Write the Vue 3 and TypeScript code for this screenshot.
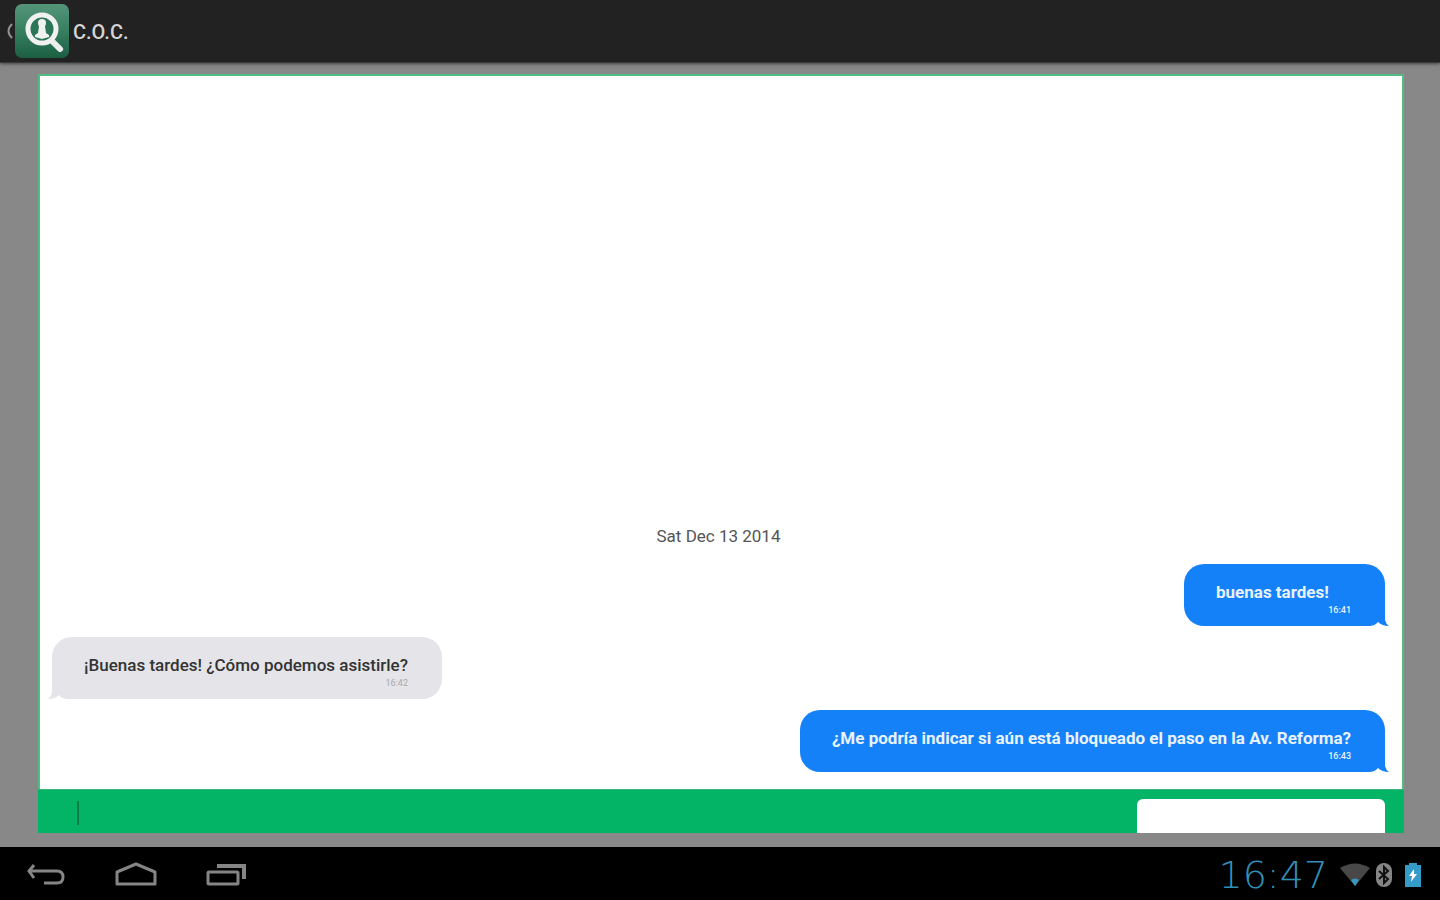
<script setup lang="ts">
import { ref } from 'vue'

interface Message {
  id: number
  text: string
  time: string
  mine: boolean
}

const draft = ref('')
const messages: Message[] = [
  { id: 1, text: 'buenas tardes!', time: '16:41', mine: true },
  { id: 2, text: '¡Buenas tardes! ¿Cómo podemos asistirle?', time: '16:42', mine: false },
  { id: 3, text: '¿Me podría indicar si aún está bloqueado el paso en la Av. Reforma?', time: '16:43', mine: true },
]
</script>

<template>
  <div class="screen">
    <header class="action-bar">
      <button class="up" type="button" aria-label="Volver">
        <svg class="chevron" width="8" height="20" viewBox="0 0 8 20" fill="none" stroke="#909090" stroke-width="2">
          <path d="M6 3Q-1 10 6 17" />
        </svg>
        <svg width="54" height="54" viewBox="0 0 54 54">
          <defs>
            <linearGradient id="tile" x1="0" y1="0" x2="0" y2="1">
              <stop offset="0" stop-color="#559579" />
              <stop offset="0.5" stop-color="#377f60" />
              <stop offset="1" stop-color="#1b5f43" />
            </linearGradient>
          </defs>
          <rect width="54" height="54" rx="7" fill="url(#tile)" />
          <path d="M36 36l9 9" stroke="#eee" stroke-width="6" stroke-linecap="round" />
          <circle cx="27" cy="25" r="14" fill="#2b7656" stroke="#f1f1f1" stroke-width="5" />
          <circle cx="27" cy="19" r="4" fill="#f1f1f1" />
          <path d="M24 22h6l1 7 3 2v2l-7 2-7-2v-2l3-2z" fill="#f1f1f1" />
        </svg>
      </button>
      <h1>C.O.C.</h1>
    </header>

    <main class="content">
      <section class="chat" aria-label="Conversación">
        <div class="history">
          <p class="date">Sat Dec 13 2014</p>
          <div
            v-for="message in messages"
            :key="message.id"
            class="bubble"
            :class="message.mine ? 'mine' : 'theirs'"
          >
            <p class="text">{{ message.text }}</p>
            <time class="time">{{ message.time }}</time>
            <svg class="tail" width="20" height="13" viewBox="0 0 20 13" aria-hidden="true">
              <path class="cutout" d="M0 12Q6 12 9 8L20 8V13H0Z" />
              <path class="point" d="M16 0V6Q17 10 20 12Q13 12 9 8V0Z" />
            </svg>
          </div>
        </div>
        <form class="composer" @submit.prevent>
          <div class="field">
            <input v-model="draft" type="text" aria-label="Mensaje" />
            <span class="caret" aria-hidden="true"></span>
          </div>
          <button class="send" type="submit" aria-label="Enviar"></button>
        </form>
      </section>
    </main>

    <footer class="system-bar">
      <nav class="keys" aria-label="Sistema">
        <button type="button" aria-label="Atrás">
          <svg width="44" height="28" viewBox="0 0 44 28" fill="none" stroke="#858585" stroke-width="3">
            <path d="M10 4L5 10L10 17M5 10H33Q39 10 39 16T33 22H20" />
          </svg>
        </button>
        <button type="button" aria-label="Inicio">
          <svg width="44" height="28" viewBox="0 0 44 28" fill="none" stroke="#858585" stroke-width="3" stroke-linejoin="round">
            <path d="M3 23V11L22 3L41 11V23Z" />
          </svg>
        </button>
        <button type="button" aria-label="Recientes">
          <svg width="44" height="28" viewBox="0 0 44 28" fill="none" stroke="#858585" stroke-width="3">
            <rect x="4" y="11" width="30" height="12" rx="1" />
            <path d="M13 5H40V18" stroke-width="4" />
          </svg>
        </button>
      </nav>
      <div class="status">
        <time class="clock">16:47</time>
        <div class="indicators">
          <svg width="30" height="26" viewBox="0 0 30 26" aria-label="Wi-Fi">
            <path d="M0 6Q15-3 30 6L15 24Z" fill="#484848" />
            <path d="M11 18Q15 15 19 18L15 24Z" fill="#3699c1" />
          </svg>
          <svg width="18" height="26" viewBox="0 0 18 26" aria-label="Bluetooth">
            <rect x="1" y="1" width="16" height="24" rx="8" fill="#858585" />
            <path d="M4 9L13 17L9 21V5L13 9L4 17" fill="none" stroke="#101010" stroke-width="2" />
          </svg>
        </div>
        <svg width="16" height="26" viewBox="0 0 16 26" aria-label="Batería">
          <path d="M0 3H4V1H12V3H16V25H0Z" fill="#359bc9" />
          <path d="M9 7L4 14H7L6 20L12 12H9Z" fill="#fff" />
        </svg>
      </div>
    </footer>
  </div>
</template>

<style>
body {
  margin: 0;
}
</style>

<style scoped>
.screen {
  display: flex;
  flex-direction: column;
  min-height: 100vh;
  background: #888;
  font-family: Roboto, "Liberation Sans", sans-serif;
}

button,
input {
  border: 0;
  padding: 0;
  background: none;
  font: inherit;
}

p,
h1 {
  margin: 0;
}

svg {
  display: block;
}

.action-bar {
  display: flex;
  align-items: center;
  gap: 4px;
  height: 62px;
  padding-left: 6px;
  background: #222;
  border-bottom: 1px solid #3a3a3a;
  box-shadow: 0 1px 3px #444;
}

.up {
  display: flex;
  align-items: center;
  gap: 1px;
}

h1 {
  padding-top: 2px;
  color: #d4d4d4;
  font-size: 20px;
  font-weight: 500;
  line-height: 28px;
}

.content {
  display: flex;
  flex: 1;
  padding: 11px 36px 14px 38px;
}

.chat {
  display: flex;
  flex: 1;
  flex-direction: column;
  min-width: 0;
}

.history {
  display: flex;
  flex: 1;
  flex-direction: column;
  justify-content: flex-end;
  gap: 11px;
  padding: 14px 17px 17px 12px;
  border: 2px solid #52bd83;
  border-bottom: 0;
  background: #fff;
}

.date {
  align-self: center;
  padding-bottom: 6px;
  color: #555;
  font-size: 17px;
  line-height: 22px;
}

.bubble {
  position: relative;
  display: flex;
  box-sizing: border-box;
  flex-direction: column;
  min-width: 201px;
  padding: 18px 34px 10px 32px;
  border-radius: 20px;
}

.mine {
  align-self: flex-end;
  border-bottom-right-radius: 0;
  background: #1581f8;
  color: #e9f3ff;
}

.theirs {
  align-self: flex-start;
  border-bottom-left-radius: 0;
  background: #e4e4e9;
  color: #333;
}

.text {
  font-size: 17px;
  font-weight: 500;
  line-height: 20px;
}

.mine .text {
  font-weight: 700;
}

.time {
  align-self: flex-end;
  margin-top: 2px;
  font-size: 9px;
  line-height: 12px;
}

.mine .time {
  font-weight: 500;
}

.theirs .time {
  color: #aaa;
}

.tail {
  position: absolute;
  right: -4px;
  bottom: -1px;
}

.theirs .tail {
  right: auto;
  left: -4px;
  transform: scaleX(-1);
}

.cutout {
  fill: #fff;
}

.point {
  fill: #1581f8;
}

.theirs .point {
  fill: #e4e4e9;
}

.composer {
  display: flex;
  height: 43px;
  padding: 0 19px 0 39px;
  border-top: 1px solid #36b574;
  background: #04b466;
}

.field {
  position: relative;
  flex: 1;
}

.field input {
  width: 100%;
  height: 100%;
  outline: 0;
  color: #222;
  font-size: 17px;
}

.caret {
  position: absolute;
  top: 11px;
  left: 0;
  width: 2px;
  height: 24px;
  background: #087d4a;
}

.field:focus-within .caret {
  display: none;
}

.send {
  width: 248px;
  margin-top: 9px;
  border-radius: 6px 6px 0 0;
  background: #fff;
}

.system-bar {
  display: flex;
  box-sizing: border-box;
  align-items: center;
  justify-content: space-between;
  height: 53px;
  padding: 2px 19px 0 24px;
  background: #000;
}

.keys {
  display: flex;
  gap: 46px;
}

.status {
  display: flex;
  align-items: center;
  gap: 12px;
}

.indicators {
  display: flex;
  gap: 5px;
}

.clock {
  color: #3190b8;
  font-family: "DejaVu Sans", sans-serif;
  font-size: 38px;
  font-weight: 200;
  line-height: 40px;
}
</style>
